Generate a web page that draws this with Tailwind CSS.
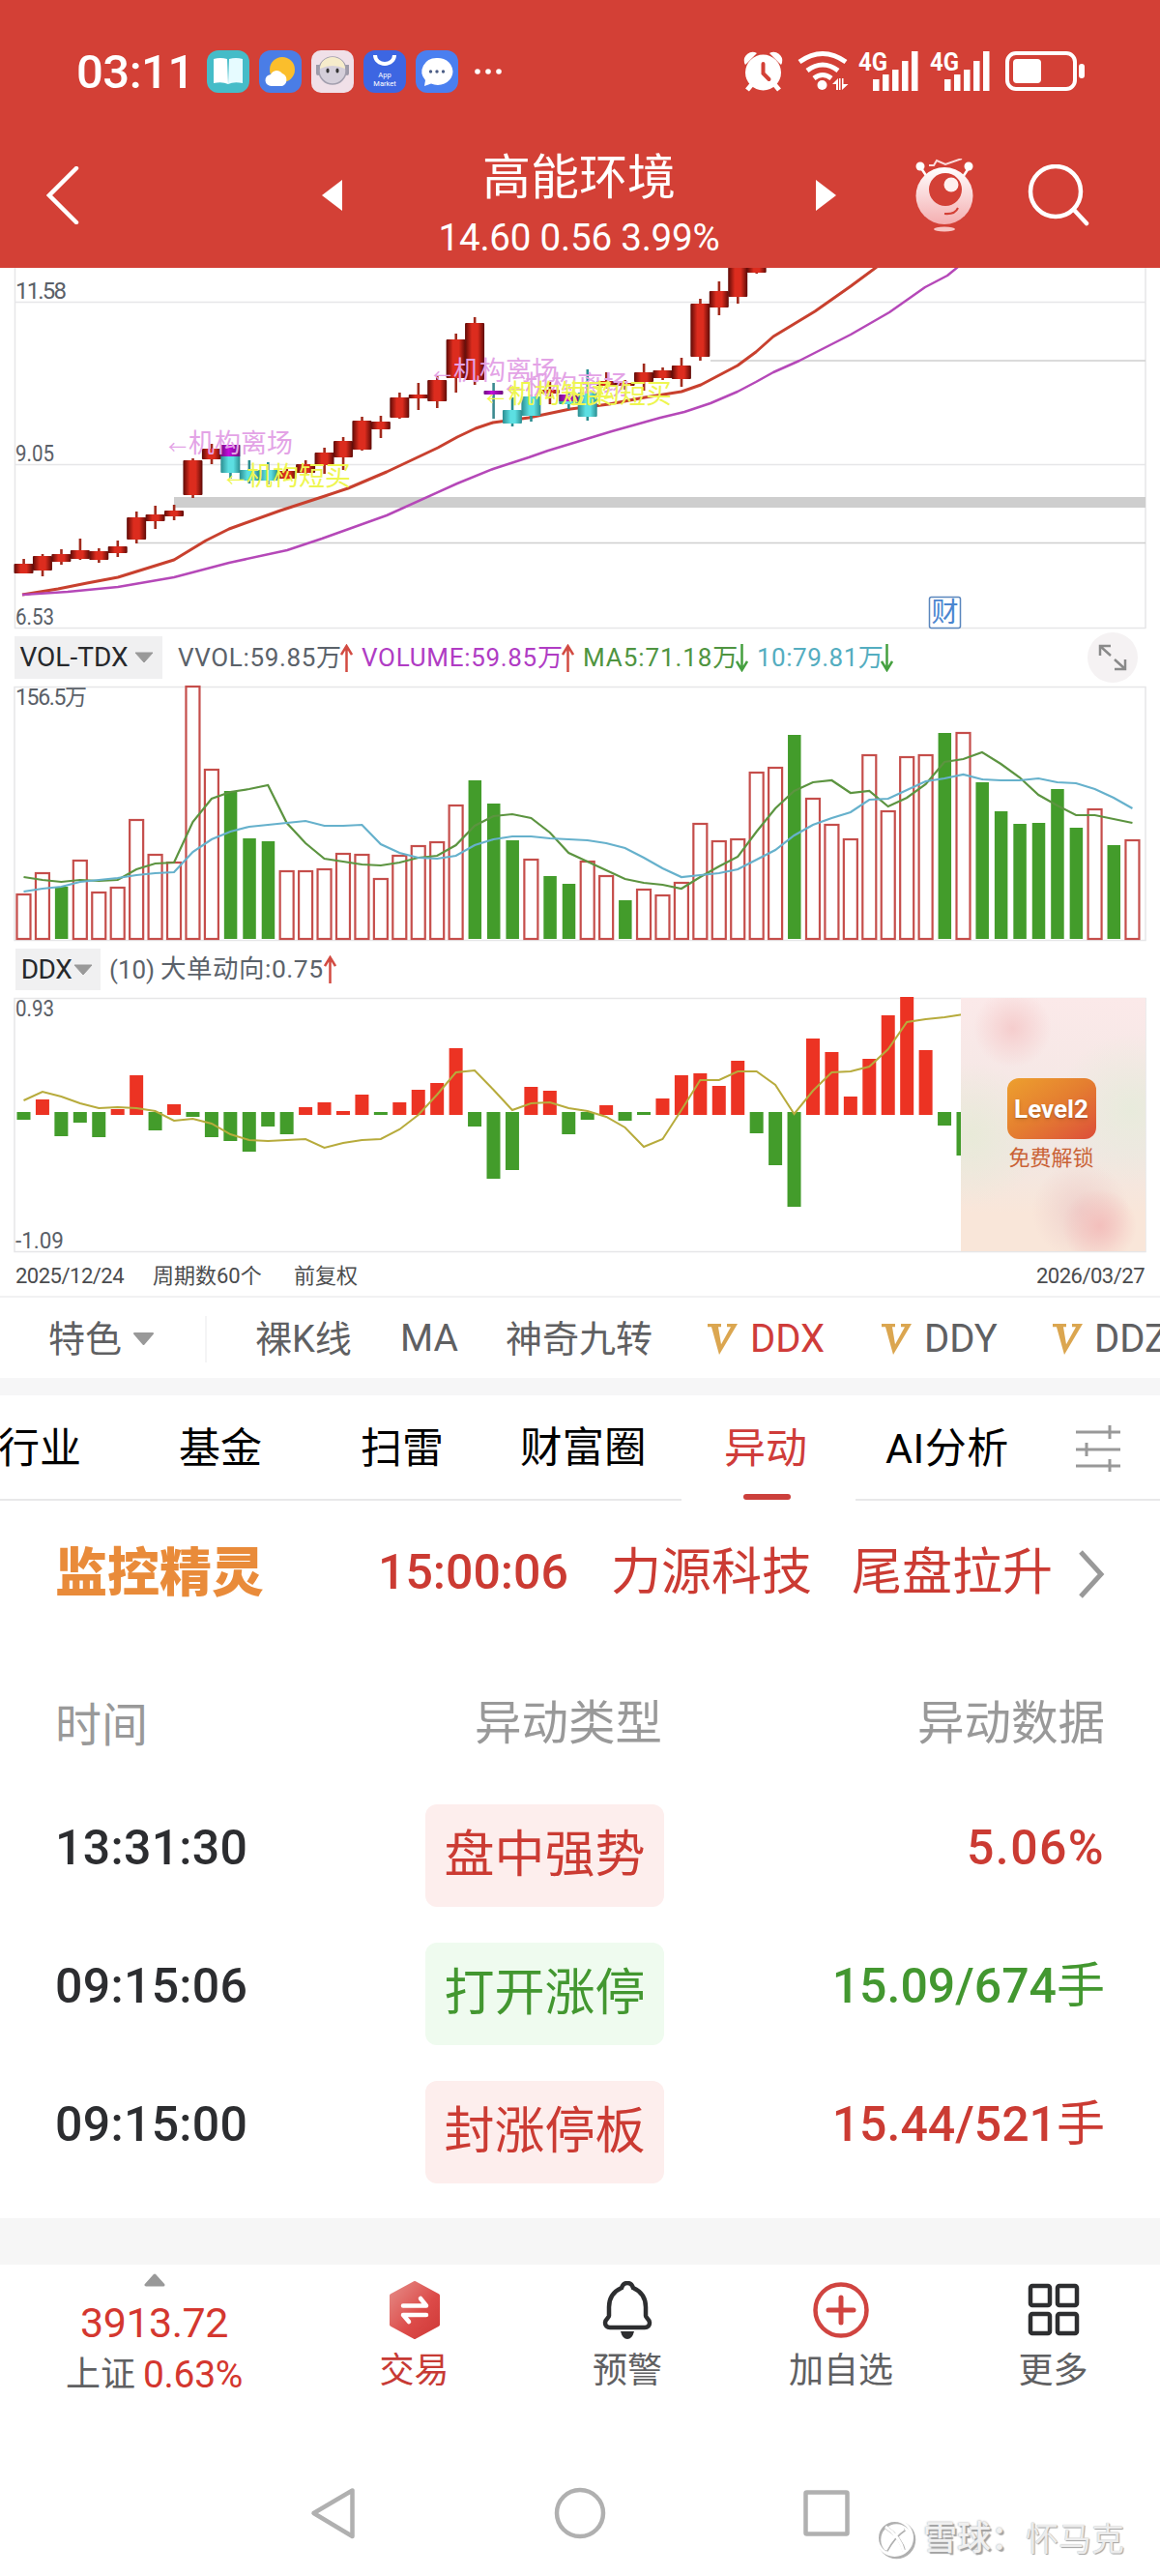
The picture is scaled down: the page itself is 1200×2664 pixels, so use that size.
<!DOCTYPE html>
<html lang="zh-CN">
<head>
    <meta charset="UTF-8">
    <meta name="viewport" content="width=device-width, initial-scale=1.0">
    <title>高能环境</title>
    <script src="https://cdn.jsdelivr.net/npm/@tailwindcss/browser@4"></script>
</head>
<body class="w-[1200px] h-[2664px] overflow-hidden bg-white font-['Roboto','Noto_Sans_CJK_SC',sans-serif] leading-none whitespace-nowrap">

    <!-- 顶部红色区域 -->
    <header class="h-[277px] bg-[#d34036] text-white">
        <div class="h-[148px] pl-[79px] pr-[76px] flex items-center justify-between">
            <div class="flex items-center gap-[10px]">
                <span class="w-[125px] text-[49px] font-medium tracking-[-0.500px]">03:11</span>
                <svg width="44" height="44" viewBox="0 0 44 44">
                    <rect width="44" height="44" rx="12" fill="#45bcc8"/>
                    <path d="M7 9Q14 7 21 9L22 35Q16 32 7 34Z" fill="#fff"/><path d="M37 9Q30 7 23 9L22 35Q28 32 37 34Z" fill="#e6fbff"/>
                </svg>
                <svg width="44" height="44" viewBox="0 0 44 44">
                    <rect width="44" height="44" rx="12" fill="#4a7de6"/>
                    <circle cx="24" cy="20" r="13" fill="#fbbe2c"/>
                    <path d="M13 37a6 6 0 0 1-1-12 7 7 0 0 1 12-1 7 7 0 0 1 0 13Z" fill="#fff"/>
                </svg>
                <svg width="44" height="44" viewBox="0 0 44 44">
                    <rect width="44" height="44" rx="10" fill="#f0e0e8"/>
                    <path d="M7 24V17h30v7" stroke="#9d9aa8" stroke-width="4" stroke-linecap="round" fill="none"/>
                    <circle cx="22" cy="21" r="14" fill="#d5cfda" stroke="#a39fae" stroke-width="1.5"/>
                    <path d="M9 19a13 12 0 0 1 26 0Q22 13 9 19Z" fill="#f6eccb"/>
                    <ellipse cx="17" cy="21" rx="1.6" ry="2.5" fill="#333"/><ellipse cx="27" cy="21" rx="1.6" ry="2.5" fill="#333"/>
                </svg>
                <svg width="44" height="44" viewBox="0 0 44 44">
                    <rect width="44" height="44" rx="12" fill="#3d66e2"/>
                    <path d="M12 5a10 9 0 0 0 20 0" stroke="#fff" stroke-width="4" fill="none"/>
                    <text x="22" y="28" font-size="7.500" fill="#fff" text-anchor="middle">App</text>
                    <text x="22" y="37" font-size="7.500" fill="#fff" text-anchor="middle">Market</text>
                </svg>
                <svg width="44" height="44" viewBox="0 0 44 44">
                    <rect width="44" height="44" rx="12" fill="#4a7ff0"/>
                    <path d="M22 8a15.500 14 0 1 1-6 26.500L9 37l1-6A15 14 0 0 1 22 8Z" fill="#fff"/>
                    <circle cx="15.500" cy="22" r="1.700" fill="#4c5e86"/><circle cx="22" cy="22" r="1.700" fill="#4c5e86"/><circle cx="28.500" cy="22" r="1.700" fill="#4c5e86"/>
                </svg>
                <svg class="ml-[6px]" width="32" height="8" fill="#fff"><circle cx="4" cy="4" r="2.800"/><circle cx="15" cy="4" r="2.800"/><circle cx="26" cy="4" r="2.800"/></svg>
            </div>
            <svg class="overflow-visible" width="354" height="44" viewBox="771 52 354 44" fill="#fff">
                <!-- 闹钟 -->
                <circle cx="790.500" cy="75" r="18.500"/>
                <path d="M771 65a9 9 0 0 1 13-10l-12 12zM810 65a9 9 0 0 0-13-10l12 12z"/>
                <path d="M779 87l-5 6M802 87l5 6" stroke="#fff" stroke-width="5"/>
                <path d="M790.500 66v10l6 6" stroke="#d34036" stroke-width="4" fill="none" stroke-linecap="round"/>
                <!-- wifi -->
                <g fill="none" stroke="#fff" stroke-width="5"><path d="M828 64q24-17 48 0"/><path d="M836 73q16-12 32 0"/><path d="M843 81q9-7 18 0"/></g>
                <circle cx="851.500" cy="88" r="5"/>
                <path d="M868 81v12h-2v-6h-4zM872 93V81h1.500v6h5zM869 81h1.500v12H869z"/>
                <!-- 信号 -->
                <text x="889" y="73" font-size="26" font-weight="700" textLength="30" lengthAdjust="spacingAndGlyphs">4G</text>
                <path d="M904 82h6.500v12H904zM914 77h6.500v17H914zM924 72h6.500v22H924zM934 63h6.500v31H934zM944 53h6.500v41H944z"/>
                <text x="963" y="73" font-size="26" font-weight="700" textLength="30" lengthAdjust="spacingAndGlyphs">4G</text>
                <path d="M978 82h6.500v12H978zM988 77h6.500v17H988zM998 72h6.500v22H998zM1008 63h6.500v31H1008zM1018 53h6.500v41H1018z"/>
                <!-- 电池 -->
                <rect x="1043" y="55" width="70" height="37" rx="9" fill="none" stroke="#fff" stroke-width="4"/>
                <rect x="1049" y="61" width="29" height="25" rx="4"/><rect x="1117" y="66" width="6" height="15" rx="3"/>
            </svg>
        </div>
        <div class="h-[129px] pl-12 pr-[71px] flex">
            <svg class="mt-6 w-[285px] h-[60px]" viewBox="48 172 285 60"><path d="M79 174L51 202L79 230" fill="none" stroke="#fff" stroke-width="4.500" stroke-linecap="round"/></svg>
            <svg class="mt-[38px] w-[21px] h-[32px]" viewBox="0 0 21 32"><path d="M21 0V32L0 16Z" fill="#fff"/></svg>
            <div class="w-[490px] pt-[11px] flex flex-col items-center">
                <h1 class="text-[50px] leading-[50px]">高能环境</h1>
                <p class="mt-[16px] text-[38.500px] leading-[42px] tracking-[-0.200px]">14.60 0.56 3.99%</p>
            </div>
            <svg class="mt-[38px] w-[21px] h-[32px]" viewBox="0 0 21 32"><path d="M0 0V32L21 16Z" fill="#fff"/></svg>
            <svg class="ml-[81px] mt-4 w-[63px] h-[78px]" viewBox="946 164 63 78">
                <defs><linearGradient id="face" x1="0" y1="0" x2="0" y2="1"><stop offset="0" stop-color="#fff"/><stop offset="1" stop-color="#f4aeb0"/></linearGradient></defs>
                <path d="M961 171h5l3-5 9 4 17-6" stroke="#fbdcdc" stroke-width="2" fill="none"/>
                <path d="M953 174l6 9M1002 174l-6 9" stroke="#fff" stroke-width="2.500"/>
                <circle cx="952" cy="172" r="4.500" fill="#fff"/><circle cx="1002" cy="172" r="4.500" fill="#fff"/>
                <circle cx="977" cy="202.500" r="29.500" fill="url(#face)"/>
                <circle cx="978" cy="196" r="17" fill="#d34036"/><circle cx="984" cy="191" r="7.500" fill="#fff0ef"/>
                <path d="M977 221q11 1 14-6" stroke="#d34036" stroke-width="2" fill="none"/>
                <ellipse cx="977" cy="237" rx="11" ry="2.500" fill="#f8c4c2"/>
            </svg>
            <svg class="ml-[54px] mt-[22px] w-[64px] h-[64px]" viewBox="0 0 64 64"><circle cx="29" cy="28" r="26" fill="none" stroke="#fff" stroke-width="4.500"/><path d="M48 47l13 14" stroke="#fff" stroke-width="4.500" stroke-linecap="round"/></svg>
        </div>
    </header>

    <!-- K线 -->
    <svg id="kline" class="block" width="1200" height="381" viewBox="0 277 1200 381">
        <defs>
            <linearGradient id="red"><stop offset="0" stop-color="#5e0a06"/><stop offset=".35" stop-color="#dc2c1e"/><stop offset=".65" stop-color="#dc2c1e"/><stop offset="1" stop-color="#5e0a06"/></linearGradient>
            <linearGradient id="cyan"><stop offset="0" stop-color="#2b8d90"/><stop offset=".4" stop-color="#5cdfe2"/><stop offset=".65" stop-color="#5cdfe2"/><stop offset="1" stop-color="#2b8d90"/></linearGradient>
            <linearGradient id="purple"><stop offset="0" stop-color="#6d0f80"/><stop offset=".4" stop-color="#c40bdc"/><stop offset="1" stop-color="#6d0f80"/></linearGradient>
        </defs>
        <path d="M15.500 277V650M1185 277V650M15 312.500H1185M15 480.500H1185M15 649.500H1185" stroke="#e6e6e8" stroke-width="1.500"/>
        <path d="M735 373H1185M141 561.500H1185" stroke="#cfcfcf" stroke-width="1.500"/>
        <rect x="180" y="514" width="1005" height="11" fill="#cecece"/>
        <g fill="none" stroke-linejoin="round">
            <polyline stroke="#c8402e" stroke-width="3" points="23,615 60,609 90,603 122,597 151,588 180,579 213,559 237,547 290,528 333,514 360,505 400,488 453,463 473,452 492,443 510,437 547,432 590,423 630,418 667,411 705,405 725,398 763,378 782,364 800,348 843,322 880,296 907,276"/>
            <polyline stroke="#b548b8" stroke-width="2.500" points="23,615 70,612 122,607 180,597 237,582 297,569 333,557 400,533 473,500 510,485 547,473 567,466 633,446 683,432 708,426 735,417 763,405 782,395 800,385 827,373 880,346 920,323 957,297 980,285 991,276"/>
        </g>
        <g id="candles"></g>
        <g font-size="27" fill="#e3a3e6">
            <text x="174" y="470" font-size="19">←</text><text x="195" y="468">机构离场</text>
            <text x="448" y="396" font-size="19">←</text><text x="469" y="393">机构离场</text>
            <text x="523" y="410" font-size="19">←</text><text x="543" y="408">机构离场</text>
        </g>
        <g font-size="27" fill="#eef650">
            <text x="234" y="504" font-size="19">←</text><text x="255" y="502">机构短买</text>
            <text x="503" y="420" font-size="19">←</text><text x="526" y="417">机构短买</text>
            <text x="525" y="411" font-size="19">←</text><text x="587" y="417">机构短买</text>
        </g>
        <g fill="#5a6068" font-size="24">
            <text x="16" y="309" textLength="53">11.58</text><text x="16" y="477" textLength="40" lengthAdjust="spacingAndGlyphs">9.05</text><text x="16" y="646" textLength="40" lengthAdjust="spacingAndGlyphs">6.53</text>
        </g>
        <rect x="961.500" y="617.500" width="32" height="32" rx="2" fill="#fff" stroke="#5a86bd" stroke-width="1.500"/>
        <text x="963.500" y="643" font-size="28" fill="#4a86d0">财</text>
    </svg>

    <!-- 成交量 -->
    <div class="h-[44px] pl-[15px] pr-[23px] flex items-center text-[26px] text-[#5b626a]">
        <button class="w-[153px] h-[44px] pl-[5px] flex items-center gap-[6px] bg-[#f0f0f1] text-[28px] text-[#26282b]"><span class="w-[113px]">VOL-TDX</span><svg width="20" height="12"><path d="M1 1H19L10 11Z" fill="#999" stroke="#999" stroke-linejoin="round"/></svg></button>
        <span class="ml-[16px] w-[168px] tracking-[0.650px]">VVOL:59.85万</span>
        <svg class="w-[13px] h-[29px]" viewBox="0 0 13 29" fill="none" stroke="#d24b42" stroke-width="2.500"><path d="M6.500 29V2M1 11L6.500 2L12 11"/></svg>
        <span class="ml-[9px] w-[207px] text-[#b03cc4] tracking-[0.700px]">VOLUME:59.85万</span>
        <svg class="w-[13px] h-[29px]" viewBox="0 0 13 29" fill="none" stroke="#d24b42" stroke-width="2.500"><path d="M6.500 29V2M1 11L6.500 2L12 11"/></svg>
        <span class="ml-[9px] w-[158px] text-[#4f9440] tracking-[0.900px]">MA5:71.18万</span>
        <svg class="w-[13px] h-[29px]" viewBox="0 0 13 29" fill="none" stroke="#45a03f" stroke-width="2.500"><path d="M6.500 0V27M1 18L6.500 27L12 18"/></svg>
        <span class="ml-[9px] w-[128px] text-[#54adc0] tracking-[0.500px]">10:79.81万</span>
        <svg class="w-[13px] h-[29px]" viewBox="0 0 13 29" fill="none" stroke="#45a03f" stroke-width="2.500"><path d="M6.500 0V27M1 18L6.500 27L12 18"/></svg>
        <svg class="ml-auto w-[52px] h-[52px] shrink-0" viewBox="0 0 52 52"><circle cx="26" cy="26" r="26" fill="#f5f2f3"/><path d="M13 24V14H24M14 15L24 24M39 28V38H28M38 37L28 28" fill="none" stroke="#8a8a8a" stroke-width="2.500"/></svg>
    </div>
    <svg class="block" width="1200" height="279" viewBox="0 702 1200 279">
        <path d="M15 710.500H1185V972.500H15Z" fill="none" stroke="#e6e6e8" stroke-width="1.500"/>
        <g id="volume"></g>
        <polyline id="ma5" fill="none" stroke="#5c9440" stroke-width="2.200"/>
        <polyline id="ma10" fill="none" stroke="#66b1cc" stroke-width="2.200"/>
        <text x="16" y="729" font-size="23" fill="#5a6068" textLength="74">156.5万</text>
    </svg>

    <!-- DDX -->
    <div class="h-[43px] pl-4 flex items-center text-[28px] text-[#5b626a]">
        <button class="w-[88px] h-[43px] pl-[5px] flex items-center gap-[1px] bg-[#f0f0f1] text-[#26282b]"><span class="w-[54px] tracking-[-0.500px]">DDX</span><svg width="20" height="12"><path d="M1 1H19L10 11Z" fill="#999" stroke="#999" stroke-linejoin="round"/></svg></button>
        <span class="ml-[9px] w-[53px] text-[26px]">(10)</span>
        <span class="w-[169px] text-[26.500px] tracking-[0.500px]">大单动向:0.75</span>
        <svg class="w-[13px] h-[29px]" viewBox="0 0 13 29" fill="none" stroke="#d24b42" stroke-width="2.500"><path d="M6.500 29V2M1 11L6.500 2L12 11"/></svg>
    </div>
    <div class="h-[276px] pr-[15px] flex justify-end relative">
        <svg class="absolute left-0 top-0" width="1200" height="276" viewBox="0 1024 1200 276">
            <path d="M15 1032.500H1185V1294.500H15Z" fill="none" stroke="#e6e6e8" stroke-width="1.500"/>
            <g id="ddx"></g>
            <polyline id="ddxLine" fill="none" stroke="#b7ab3c" stroke-width="2"/>
            <g fill="#5a6068" font-size="24"><text x="16" y="1051" textLength="40" lengthAdjust="spacingAndGlyphs">0.93</text><text x="16" y="1291" textLength="50" lengthAdjust="spacingAndGlyphs">-1.09</text></g>
        </svg>
        <div class="relative mt-2 w-[191px] h-[262px] pr-[4px] flex flex-col items-center bg-[radial-gradient(circle_at_28%_12%,#f5cdcd_0,#f5cdcd00_15%),radial-gradient(circle_at_75%_90%,#f3bfbc_0,#f3bfbc00_14%),radial-gradient(circle_at_65%_84%,#eed0cc_0,#eed0cc00_20%),radial-gradient(circle_at_5%_54%,#e8ead8_0,#e8ead800_32%),radial-gradient(circle_at_92%_44%,#e8ebdc_0,#e8ebdc00_34%),linear-gradient(#fbe9e9,#f1e7e3_60%,#f9e6d9_85%)]">
            <div class="mt-[83px] w-[92px] h-[63px] rounded-xl bg-linear-to-br from-[#eda02e] via-[#e47d30] to-[#dc4d39] flex items-center justify-center text-[26px] font-bold text-white text-shadow-md">Level2</div>
            <div class="mt-[9px] text-[22px] leading-[22px] text-[#ca6236]">免费解锁</div>
        </div>
    </div>
    <div class="h-[40px] pl-4 pr-4 flex items-center text-[22px] text-[#4b4c4e]">
        <span class="w-[142px] tracking-[-0.500px]">2025/12/24</span><span class="w-[146px]">周期数60个</span><span>前复权</span><span class="ml-auto tracking-[-0.500px]">2026/03/27</span>
    </div>

    <!-- 指标切换 -->
    <div class="h-[85px] border-t-2 border-[#f1f1f2] pt-[2px] pl-[50px] flex items-center text-[38px] text-[#5f6062] [&>*]:shrink-0">
        <span class="w-[87px]">特色</span>
        <svg width="23" height="15"><path d="M2 2H21L11.500 13Z" fill="#999" stroke="#999" stroke-width="2" stroke-linejoin="round"/></svg>
        <i class="ml-[52px] w-[2px] h-[48px] bg-[#f4f4f5]"></i>
        <span class="ml-[50px] w-[150px]">裸K线</span>
        <span class="w-[109px] text-[39px]">MA</span>
        <span class="w-[209px]">神奇九转</span>
        <svg class="mr-[13px]" width="31" height="32" viewBox="0 0 31 30" preserveAspectRatio="none"><path d="M0 0H14V3H11L14 20L24 3H20V0H31L12 30L4 3H0Z" fill="#dba650"/></svg>
        <span class="w-[136px] text-[40px] text-[#cf3c3a]">DDX</span>
        <svg class="mr-[13px]" width="31" height="32" viewBox="0 0 31 30" preserveAspectRatio="none"><path d="M0 0H14V3H11L14 20L24 3H20V0H31L12 30L4 3H0Z" fill="#dba650"/></svg>
        <span class="w-[133px] text-[40px]">DDY</span>
        <svg class="mr-[12px]" width="31" height="32" viewBox="0 0 31 30" preserveAspectRatio="none"><path d="M0 0H14V3H11L14 20L24 3H20V0H31L12 30L4 3H0Z" fill="#dba650"/></svg>
        <span class="text-[40px]">DDZ</span>
    </div>
    <div class="h-[18px] bg-[#f6f6f7]"></div>

    <!-- 栏目 -->
    <nav class="h-[109px] pt-[3px] flex items-center text-[43px] text-black border-b-2 border-[#e8e8e9] relative">
        <span class="ml-[-2px] w-[187px]">行业</span>
        <span class="w-[188px]">基金</span>
        <span class="w-[165px]">扫雷</span>
        <span class="w-[211px] text-[43.500px]">财富圈</span>
        <span class="w-[167px] text-[#cf3c3a]">异动</span>
        <span class="w-[197px] tracking-[0.500px]">AI分析</span>
        <svg width="46" height="48" viewBox="0 0 46 48" stroke="#999" stroke-width="3"><path d="M0 7H46M0 25H46M0 42H46M35 0V14M11 18V32M35 35V48"/></svg>
        <i class="absolute left-[705px] bottom-[-2px] w-[180px] h-[2px] bg-white"></i>
        <i class="absolute left-[769px] bottom-[-1px] w-[49px] h-[6px] rounded-sm bg-[#cc403c]"></i>
    </nav>

    <!-- 监控精灵 -->
    <section class="h-[742px]">
        <div class="h-[151px] pl-[57px] flex items-center text-[#cb3b33] text-[52px]">
            <span class="w-[334px] text-[54px] font-black text-[#e98b3a]">监控精灵</span>
            <span class="w-[241px] pb-[4px] text-[50px] font-medium">15:00:06</span>
            <span class="w-[249px] pb-[2px]">力源科技</span>
            <span class="w-[234px] pb-[2px]">尾盘拉升</span>
            <svg width="28" height="50" viewBox="0 0 28 50"><path d="M3 2L24 25L3 48" fill="none" stroke="#999" stroke-width="5"/></svg>
        </div>
        <div class="h-[159px] px-[57px] flex items-center text-[48px] text-[#999]">
            <span class="w-[434px] pt-[5px]">时间</span><span class="pt-[1px] text-[48.500px]">异动类型</span><span class="ml-auto pt-[1px] text-[48.500px]">异动数据</span>
        </div>
        <div class="pt-[4px] px-[57px] flex flex-col gap-[37px] text-[50px] font-medium text-[#2c2d30]">
            <div class="h-[106px] flex items-center">
                <span class="w-[383px] pb-[17px] tracking-[0.300px]">13:31:30</span>
                <span class="w-[247px] h-[106px] rounded-xl bg-[#fdeeed] text-[#cb3b33] text-[52px] font-normal flex items-center justify-center">盘中强势</span>
                <span class="ml-auto pb-[17px] text-[#cb3b33] tracking-[1.400px]">5.06%</span>
            </div>
            <div class="h-[106px] flex items-center">
                <span class="w-[383px] pb-[17px] tracking-[0.300px]">09:15:06</span>
                <span class="w-[247px] h-[106px] rounded-xl bg-[#effbef] text-[#439730] text-[52px] font-normal flex items-center justify-center">打开涨停</span>
                <span class="ml-auto pb-[17px] text-[#439730]">15.09/674<span class="font-normal">手</span></span>
            </div>
            <div class="h-[106px] flex items-center">
                <span class="w-[383px] pb-[17px] tracking-[0.300px]">09:15:00</span>
                <span class="w-[247px] h-[106px] rounded-xl bg-[#fdeeed] text-[#cb3b33] text-[52px] font-normal flex items-center justify-center">封涨停板</span>
                <span class="ml-auto pb-[17px] text-[#cb3b33]">15.44/521<span class="font-normal">手</span></span>
            </div>
        </div>
    </section>
    <div class="h-[48px] bg-[#f6f6f6]"></div>

    <!-- 底部操作栏 -->
    <footer class="h-[158px] pt-[9px] flex text-[36px] text-[#5f6062]">
        <div class="w-[319px] flex flex-col items-center">
            <svg width="22" height="14"><path d="M2 12H20L11 2Z" fill="#999" stroke="#999" stroke-width="3" stroke-linejoin="round"/></svg>
            <div class="mt-[15px] text-[43px] leading-[44px] text-[#d4372f] tracking-[-0.500px]">3913.72</div>
            <div class="mt-[12px] leading-[40px] flex gap-2"><span>上证</span><span class="text-[39px] text-[#d4372f] tracking-[-0.300px]">0.63%</span></div>
        </div>
        <div class="w-[219px] pt-[8px] flex flex-col items-center text-[#c73a34]">
            <svg width="54" height="60" viewBox="0 0 54 60"><defs><linearGradient id="hex" x1="0" y1="0" x2="1" y2="1"><stop offset="0" stop-color="#e58b86"/><stop offset=".6" stop-color="#dc4a48"/><stop offset="1" stop-color="#cf3a38"/></linearGradient></defs><path d="M27 2L51 15V45L27 58L3 45V15Z" fill="url(#hex)" stroke="url(#hex)" stroke-width="4" stroke-linejoin="round"/><path d="M15 25.500H39L33 18M39 35H15L21 42" fill="none" stroke="#fff" stroke-width="4.500" stroke-linecap="round" stroke-linejoin="round"/></svg>
            <span class="mt-[15px]">交易</span>
        </div>
        <div class="w-[222px] pt-[8px] flex flex-col items-center">
            <svg width="52" height="60" viewBox="0 0 52 60"><path d="M26 2C23 2 21 4 20 7C11 11 7 18 7 27V36C7 38 3 39 3 43C3 46 5 48 8 48H44C47 48 49 46 49 43C49 39 45 38 45 36V27C45 18 41 11 32 7C31 4 29 2 26 2Z" fill="none" stroke="#2d2e30" stroke-width="4.500"/><path d="M19 52H33Q31 60 26 60Q21 60 19 52Z" fill="#2d2e30"/></svg>
            <span class="mt-[15px]">预警</span>
        </div>
        <div class="w-[220px] pt-[8px] flex flex-col items-center">
            <svg width="60" height="60" viewBox="0 0 60 60" fill="none" stroke="#d04440" stroke-linecap="round"><circle cx="30" cy="30" r="26.500" stroke-width="4.500"/><path d="M17 30H43M30 17V43" stroke-width="5"/></svg>
            <span class="mt-[15px]">加自选</span>
        </div>
        <div class="w-[219px] pt-[8px] flex flex-col items-center">
            <svg width="54" height="60" viewBox="0 0 54 60" fill="none" stroke="#2d2e30" stroke-width="4.500"><rect x="3" y="5" width="20" height="20" rx="2"/><rect x="31" y="5" width="20" height="20" rx="2"/><rect x="3" y="34" width="20" height="20" rx="2"/><rect x="31" y="34" width="20" height="20" rx="2"/></svg>
            <span class="mt-[15px]">更多</span>
        </div>
    </footer>

    <!-- 系统导航 -->
    <div class="h-[164px] relative">
        <svg class="block" width="1200" height="164" viewBox="0 2500 1200 164" fill="none" stroke="#b0b0b0" stroke-width="4.500" stroke-linejoin="round">
            <path d="M364.500 2575.500V2623L324.500 2599Z"/><circle cx="600" cy="2599" r="24"/><rect x="833.500" y="2577.500" width="43" height="43" rx="1"/>
        </svg>
        <div class="absolute left-[905px] top-[104px] flex items-center gap-[7px] text-[35px]">
            <svg width="43" height="43" viewBox="0 0 43 43" fill="none"><g stroke="#b0b0b0" stroke-width="3.500"><circle cx="22.500" cy="22.500" r="18"/><path d="M12 10Q27 20 31 36M31 12Q20 19 12 34"/></g><g stroke="#fff" stroke-width="3"><circle cx="20.500" cy="20.500" r="18"/><path d="M11 9Q26 19 30 35M30 11Q19 18 11 33"/></g></svg>
            <span class="w-[99px] font-medium text-[#f0f0f0] [text-shadow:2px_2px_1px_#a2a2a2,0_0_2px_#999]">雪球：</span>
            <span class="text-[34px] text-[#ececec] [text-shadow:1px_1px_1px_#a2a2a2,0_0_1px_#aaa]">怀马克</span>
        </div>
    </div>

    <script>
        const x = i => 24.5 + 19.44 * i;

        // [上影, 实体顶, 实体底, 下影, 颜色]
        const candles = [
            [578,583,593,593],[573,575,590,596],[568,573,581,584],[557,569,578,579],[567,570,579,582],[559,565,572,576],
            [529,535,558,562],[523,532,539,547],[522,528,534,538],[474,476,512,515],[459,464,475,480],[460,460,489,495,'cyan'],
            [476,486,497,500,'cyan'],[478,486,497,501,'cyan'],[484,487,495,497],[476,480,489,491],[463,468,481,490],[452,456,473,486],
            [431,435,465,466],[430,436,444,453],[406,411,432,433],[396,408,412,424],[389,393,415,422],[345,351,391,406],
            [328,334,393,398],[396,404,408,433,'purple'],[411,424,438,441,'cyan'],[408,410,430,436,'cyan'],[394,403,407,418],[406,408,418,423,'cyan'],
            [382,406,431,435,'cyan'],[385,394,399,402],[393,396,399,403],[376,385,395,404],[380,383,391,393],[370,378,392,400],
            [309,314,369,373],[291,301,318,326],[270,270,307,314],[270,270,282,283]
        ];
        const wick = { red: '#a02a1c', cyan: '#2b8d90', purple: '#3c8a90' };
        document.getElementById('candles').innerHTML = candles.map(([h, t, b, l, c = 'red'], i) =>
            `<rect x="${x(i) - 1.2}" y="${h}" width="2.6" height="${l - h}" fill="${wick[c]}"/>` +
            `<rect x="${x(i) - 10}" y="${t}" width="20" height="${b - t}" rx="1" fill="url(#${c})"/>`
        ).join('') +
            `<rect x="${x(11) - 10}" y="460" width="20" height="12" fill="url(#purple)"/>` +
            `<rect x="${x(29) - 10}" y="408" width="20" height="7" fill="url(#purple)"/>`;

        const volTop = [925,903,917,890,923,918,848,884,892,710,796,818,867,870,901,901,899,883,884,909,885,875,871,833,807,831,869,889,906,914,
            891,906,931,920,926,913,852,870,868,799,794,760,826,853,868,781,839,783,781,758,758,809,839,852,851,816,856,837,874,869];
        const volGreen = [2,11,12,13,24,25,26,28,29,32,41,49,51,52,53,54,55,56,58];
        document.getElementById('volume').innerHTML = volTop.map((t, i) => volGreen.includes(i)
            ? `<rect x="${x(i) - 6.5}" y="${t}" width="13.500" height="${971 - t}" fill="#439c2b"/>`
            : `<rect x="${x(i) - 7}" y="${t}" width="14" height="${971 - t}" fill="#fff" stroke="#c54e4b" stroke-width="2.200"/>`
        ).join('');

        const points = ys => ys.map((y, i) => `${x(i)},${y}`).join(' ');
        document.getElementById('ma5').setAttribute('points', points([907,910,912,910,911,910,899,893,892,850,826,819,816,812,851,872,888,891,894,895,
            892,887,885,874,854,844,842,846,861,882,891,900,909,913,915,919,907,896,886,860,836,818,809,807,820,818,834,825,811,788,785,778,790,804,822,833,843,843,847,851]));
        document.getElementById('ma10').setAttribute('points', points([922,919,917,912,910,908,905,903,902,881,868,860,855,853,851,849,854,854,853,873,
            882,887,888,885,874,868,865,865,867,868,869,872,877,887,898,907,905,903,899,889,879,864,853,846,840,827,826,817,808,805,801,806,807,807,805,809,810,816,825,836]));

        // 小于1150为红柱
        const ddx = [1158,1137,1175,1161,1176,1147,1112,1169,1142,1155,1176,1180,1191,1165,1173,1145,1140,1149,1132,1153,1140,1127,1120,1084,1165,1219,1210,
            1124,1128,1173,1158,1143,1159,1153,1136,1112,1110,1123,1097,1172,1205,1248,1074,1088,1134,1095,1050,1031,1086,1164,1195];
        document.getElementById('ddx').innerHTML = ddx.map((v, i) => v < 1150
            ? `<rect x="${x(i) - 7}" y="${v}" width="14" height="${1153 - v}" fill="#ec3323"/>`
            : `<rect x="${x(i) - 7}" y="1150" width="14" height="${v - 1150}" fill="#439c2b"/>`
        ).join('');
        document.getElementById('ddxLine').setAttribute('points', points([1138,1129,1134,1141,1146,1145,1146,1149,1159,1157,1162,1173,1179,1180,1179,1178,1187,1182,
            1179,1178,1168,1153,1132,1109,1107,1127,1148,1141,1140,1146,1149,1155,1166,1186,1178,1148,1117,1117,1108,1108,1122,1152,1128,1109,1108,1103,1085,1057,1054,1052,1049]));
    </script>
</body>
</html>
